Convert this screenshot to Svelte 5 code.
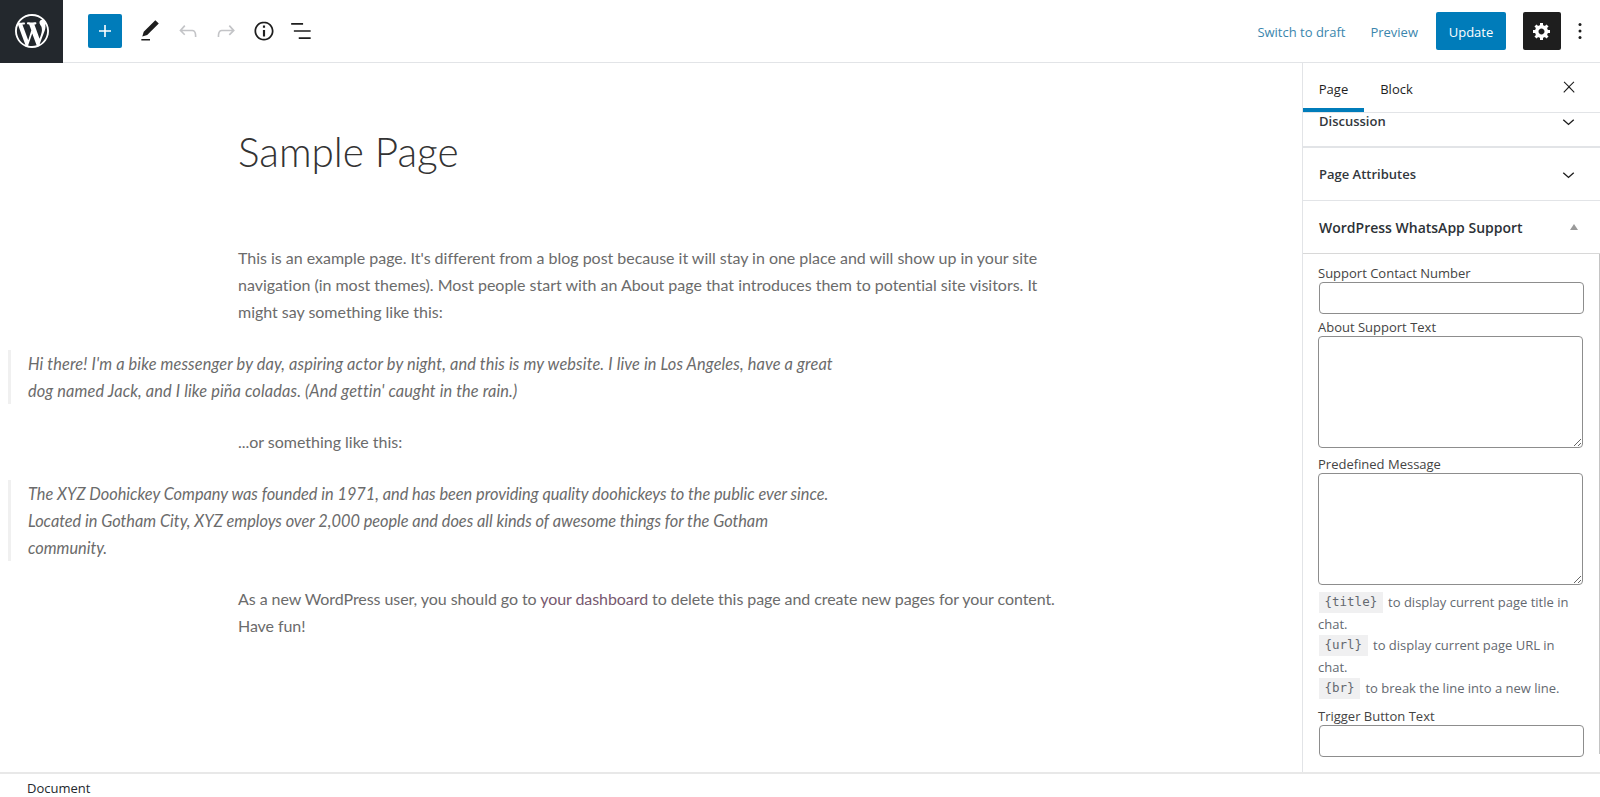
<script>
  const rows = [
    { label: 'Discussion', cls: 'clipped' },
    { label: 'Page Attributes', cls: '' }
  ];
</script>

<div class="editor">
  <header class="topbar">
    <div class="tools">
      <div class="logo">
        <svg viewBox="0 0 20 20" width="34" height="34"><path fill="#fff" d="M20 10c0-5.51-4.49-10-10-10C4.48 0 0 4.49 0 10c0 5.52 4.48 10 10 10 5.51 0 10-4.48 10-10zM7.78 15.37L4.37 6.22c.55-.02 1.17-.08 1.17-.08.5-.06.44-1.13-.06-1.11 0 0-1.45.11-2.37.11-.18 0-.37 0-.58-.01C4.12 2.69 6.87 1.11 10 1.11c2.33 0 4.45.87 6.05 2.34-.68-.11-1.65.39-1.65 1.58 0 .74.45 1.36.9 2.1.35.61.55 1.36.55 2.46 0 1.49-1.4 5-1.4 5l-3.03-8.37c.54-.02.82-.17.82-.17.5-.05.44-1.25-.06-1.22 0 0-1.44.12-2.38.12-.87 0-2.33-.12-2.33-.12-.5-.03-.56 1.2-.06 1.22l.92.08 1.26 3.41zM17.41 10c.24-.64.74-1.87.43-4.25.7 1.29 1.05 2.71 1.05 4.25 0 3.29-1.73 6.24-4.4 7.78.97-2.59 1.94-5.2 2.92-7.78zM6.1 18.09C3.12 16.65 1.11 13.53 1.11 10c0-1.3.23-2.48.72-3.59C3.25 10.3 4.67 14.2 6.1 18.09zm4.03-6.63l2.58 6.98c-.86.29-1.76.45-2.71.45-.79 0-1.57-.11-2.29-.33.81-2.38 1.62-4.74 2.42-7.1z"/></svg>
      </div>
      <button class="add" aria-label="Add block">
        <svg viewBox="0 0 24 24" width="24" height="24"><path fill="#fff" d="M18 11.2h-5.2V6h-1.6v5.2H6v1.6h5.2V18h1.6v-5.2H18z"/></svg>
      </button>
      <svg class="ic pen" viewBox="0 0 24 24" width="26" height="26"><path d="M20.1 5.1L16.9 2 6.2 12.7l-1.3 4.4 4.5-1.3L20.1 5.1zM4 20.8h8v-1.5H4v1.5z"/></svg>
      <svg class="ic off" viewBox="0 0 24 24" width="26" height="26"><path d="M18.3 11.7c-.6-.6-1.4-.9-2.3-.9H6.7l2.9-3.3-1.1-1-4.5 5L8.5 16l1-1-2.7-2.7H16c.5 0 .9.2 1.3.5 1 1 1 3.4 1 4.5v.3h1.5v-.2c0-1.5 0-4.3-1.5-5.7z"/></svg>
      <svg class="ic off" viewBox="0 0 24 24" width="26" height="26"><path d="M15.6 6.5l-1.1 1 2.9 3.3H8c-.9 0-1.7.3-2.3.9-1.4 1.5-1.4 4.2-1.4 5.6v.2h1.5v-.3c0-1.1 0-3.5 1-4.5.3-.3.7-.5 1.3-.5h9.2L14.5 15l1.1 1.1 4.6-4.6-4.6-5z"/></svg>
      <svg class="ic" viewBox="0 0 24 24" width="26" height="26"><path d="M12 3.2c-4.8 0-8.8 3.9-8.8 8.8 0 4.8 3.9 8.8 8.8 8.8 4.8 0 8.8-3.9 8.8-8.8 0-4.8-4-8.8-8.8-8.8zm0 16c-4 0-7.2-3.3-7.2-7.2C4.8 8 8 4.8 12 4.8s7.2 3.3 7.2 7.2c0 4-3.2 7.2-7.2 7.2zM11 17h2v-6h-2v6zm0-8h2V7h-2v2z"/></svg>
      <svg class="ic" viewBox="0 0 24 24" width="26" height="26"><path d="M2 4.7h11v1.6H2zM4.5 11.2H20v1.6H4.5zM9 17.7h11v1.6H9z"/></svg>
    </div>
    <div class="actions">
      <span class="link draft">Switch to draft</span>
      <span class="link preview">Preview</span>
      <button class="update">Update</button>
      <button class="gear" aria-label="Settings">
        <svg viewBox="0 0 20 20" width="20" height="20"><path fill="#fff" d="M18 12h-2.18c-.17.7-.44 1.35-.81 1.93l1.54 1.54-2.1 2.1-1.54-1.54c-.58.36-1.23.63-1.91.79V19H8v-2.18c-.68-.16-1.33-.43-1.91-.79l-1.54 1.54-2.12-2.12 1.54-1.54c-.36-.58-.63-1.23-.79-1.91H1V9.03h2.17c.16-.7.44-1.35.8-1.94L2.43 5.55l2.1-2.1 1.54 1.54c.58-.37 1.24-.64 1.93-.81V2h3v2.18c.68.16 1.33.43 1.91.79l1.54-1.54 2.12 2.12-1.54 1.54c.36.59.64 1.24.8 1.94H18V12zm-8.5 1.5c1.66 0 3-1.34 3-3s-1.34-3-3-3-3 1.34-3 3 1.34 3 3 3z"/></svg>
      </button>
      <svg class="more" viewBox="0 0 4 18" width="4" height="18"><circle cx="2" cy="2.5" r="1.5"/><circle cx="2" cy="9" r="1.5"/><circle cx="2" cy="15.5" r="1.5"/></svg>
    </div>
  </header>

  <div class="body">
    <main class="content">
      <h1>Sample Page</h1>
      <p class="first">This is an example page. It's different from a blog post because it will stay in one place and will show up in your site<br>navigation (in most themes). Most people start with an About page that introduces them to potential site visitors. It<br>might say something like this:</p>
      <blockquote class="hi">Hi there! I'm a bike messenger by day, aspiring actor by night, and this is my website. I live in Los Angeles, have a great<br>dog named Jack, and I like piña coladas. (And gettin' caught in the rain.)</blockquote>
      <p>...or something like this:</p>
      <blockquote>The XYZ Doohickey Company was founded in 1971, and has been providing quality doohickeys to the public ever since.<br>Located in Gotham City, XYZ employs over 2,000 people and does all kinds of awesome things for the Gotham<br>community.</blockquote>
      <p class="last">As a new WordPress user, you should go to <span class="plink">your dashboard</span> to delete this page and create new pages for your content.<br>Have fun!</p>
    </main>

    <aside class="sidebar">
      <div class="tabs">
        <span class="tab active">Page</span>
        <span class="tab block">Block</span>
        <svg class="close" viewBox="0 0 24 24" width="18" height="18"><path d="M13 11.8l6.1-6.3-1-1-6.1 6.2-6.1-6.2-1 1 6.1 6.3-6.5 6.7 1 1 6.5-6.6 6.5 6.6 1-1z"/></svg>
      </div>
      {#each rows as row}
        <div class="row {row.cls}">
          <span>{row.label}</span>
          <svg viewBox="0 0 24 24" width="21" height="21"><path d="M17.5 9.4L12 14.2 6.5 9.4l-1 1.2 6.5 5.6 6.5-5.6z"/></svg>
        </div>
      {/each}
      <div class="meta-head">
        <span>WordPress WhatsApp Support</span>
        <i class="tri"></i>
      </div>
      <div class="meta">
        <label class="lab" for="num">Support Contact Number</label>
        <input id="num" type="text">
        <label class="lab" for="about">About Support Text</label>
        <textarea id="about"></textarea>
        <label class="lab" for="msg">Predefined Message</label>
        <textarea id="msg"></textarea>
        <div class="hint">
          <code>{'{title}'}</code> to display current page title in chat.<br>
          <code>{'{url}'}</code> to display current page URL in chat.<br>
          <code>{'{br}'}</code> to break the line into a new line.
        </div>
        <label class="lab trig" for="trig">Trigger Button Text</label>
        <input id="trig" type="text">
      </div>
      <div class="thumb"></div>
    </aside>
  </div>

  <footer class="foot">Document</footer>
</div>

<style>
  :global(body) {
    margin: 0;
    background: #fff;
  }
  .editor {
    width: 1600px;
    height: 797px;
    display: flex;
    flex-direction: column;
    overflow: hidden;
    font-family: "Open Sans", "Noto Sans", sans-serif;
    color: #1e1e1e;
  }

  /* top bar */
  .topbar {
    height: 62px;
    flex: none;
    display: flex;
    justify-content: space-between;
    border-bottom: 1px solid #e2e4e7;
  }
  .tools {
    display: flex;
    align-items: center;
  }
  .logo {
    width: 63px;
    height: 63px;
    background: #23282d;
    display: flex;
    align-items: center;
    justify-content: center;
  }
  .add {
    width: 34px;
    height: 34px;
    margin: 0 15px 0 25px;
    padding: 0;
    border: 0;
    border-radius: 2px;
    background: #007cba;
    display: flex;
    align-items: center;
    justify-content: center;
  }
  .ic {
    fill: #1e1e1e;
    margin-right: 12px;
    flex: none;
  }
  .ic.off {
    fill: #c3c4c7;
  }
  .actions {
    display: flex;
    align-items: center;
    padding-right: 18px;
  }
  .link {
    font-size: 13px;
    color: #3b86ad;
    padding-top: 1px;
  }
  .preview {
    margin-left: 25px;
    margin-right: 18px;
  }
  .update {
    width: 70px;
    height: 38px;
    padding: 1px 0 0;
    border: 0;
    border-radius: 2px;
    background: #007cba;
    color: #fff;
    font: 13px "Open Sans", sans-serif;
  }
  .gear {
    width: 38px;
    height: 38px;
    margin-left: 17px;
    margin-right: 17px;
    padding: 0;
    border: 0;
    border-radius: 2px;
    background: #1e1e1e;
    display: flex;
    align-items: center;
    justify-content: center;
  }
  .more {
    fill: #1e1e1e;
  }

  /* main area */
  .body {
    flex: 1;
    min-height: 0;
    display: flex;
  }
  .content {
    flex: 1;
    padding-top: 64px;
    font-family: Lato, "Open Sans", sans-serif;
    font-size: 16px;
    letter-spacing: -0.02px;
    line-height: 27px;
    color: #6b6b6b;
    white-space: nowrap;
  }
  h1 {
    margin: 0 0 0 238px;
    font-size: 40.5px;
    line-height: 50px;
    font-weight: 300;
    color: #333;
  }
  p {
    margin: 24.5px 0 0 238px;
  }
  p.first {
    margin-top: 67px;
  }
  p.last {
    letter-spacing: -0.07px;
  }
  blockquote {
    margin: 24.5px 0 0 8px;
    padding-left: 17px;
    border-left: 3px solid #f0f0f0;
    font-style: italic;
    font-size: 16.35px;
  }
  blockquote.hi {
    letter-spacing: 0.12px;
  }
  .plink {
    color: #77596f;
  }

  /* sidebar */
  .sidebar {
    position: relative;
    width: 297px;
    flex: none;
    border-left: 1px solid #e2e4e7;
    font-size: 13px;
  }
  .tabs {
    height: 49px;
    display: flex;
    align-items: center;
    border-bottom: 1px solid #e2e4e7;
    position: relative;
  }
  .tab {
    width: 61px;
    height: 49px;
    box-sizing: border-box;
    padding-top: 17px;
    text-align: center;
    color: #1e1e1e;
  }
  .tab.active {
    border-bottom: 4px solid #007cba;
  }
  .tab.block {
    margin-left: 2px;
  }
  .close {
    position: absolute;
    right: 22px;
    top: 15px;
    fill: #1e1e1e;
  }
  .row {
    height: 53px;
    box-sizing: border-box;
    padding: 0 21px 0 16px;
    display: flex;
    align-items: center;
    justify-content: space-between;
    border-bottom: 1px solid #e2e4e7;
    font-weight: 600;
    color: #32373c;
  }
  .row.clipped {
    height: 35px;
    border-bottom-width: 2px;
    padding-bottom: 17px;
    padding-top: 0;
  }
  .row svg {
    fill: #1e1e1e;
  }
  .meta-head {
    height: 53px;
    box-sizing: border-box;
    padding: 0 20px 0 16px;
    display: flex;
    align-items: center;
    justify-content: space-between;
    border-bottom: 1px solid #d8d8d8;
    font-size: 14px;
    font-weight: 600;
    color: #2c3136;
  }
  .tri {
    width: 0;
    height: 0;
    margin-right: 2px;
    border-left: 4px solid transparent;
    border-right: 4px solid transparent;
    border-bottom: 6px solid #9a9a9a;
  }
  .meta {
    padding: 10px 14px 0 15px;
    display: flex;
    flex-direction: column;
    align-items: flex-start;
  }
  .lab {
    height: 18px;
    line-height: 18px;
    color: #444;
  }
  input, textarea {
    box-sizing: border-box;
    display: block;
    width: 265px;
    margin: 0;
    border: 1px solid #8d8d8d;
    border-radius: 4px;
    background: #fff;
  }
  input {
    height: 32px;
    margin: 0 0 4px 1px;
  }
  textarea {
    height: 112px;
    margin-bottom: 7px;
  }
  .hint {
    width: 265px;
    font-size: 13px;
    line-height: 21.5px;
    color: #646970;
  }
  code {
    display: inline-block;
    margin: 0 2px 0 1px;
    padding: 0 5.5px;
    height: 21px;
    line-height: 20px;
    vertical-align: top;
    background: #f0f0f1;
    font-family: "DejaVu Sans Mono", "Liberation Mono", monospace;
    font-size: 12.5px;
  }
  .trig {
    margin-top: 7.5px;
  }
  .thumb {
    position: absolute;
    right: 0;
    top: 191px;
    width: 1px;
    height: 500px;
    background: #c4c4c4;
  }

  .foot {
    height: 21px;
    flex: none;
    padding: 2px 0 0 27px;
    border-top: 2px solid #e8e8e8;
    font-size: 13px;
    line-height: 24px;
    color: #23282d;
  }
</style>
